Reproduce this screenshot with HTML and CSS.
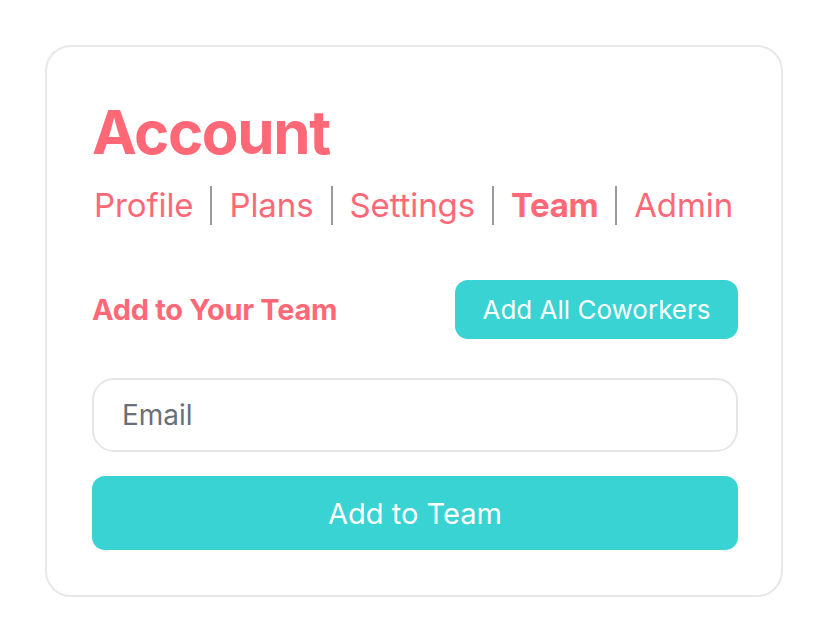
FILE: index.html
```html
<!DOCTYPE html>
<html lang="en">
<head>
    <meta charset="UTF-8">
    <meta name="viewport" content="width=device-width, initial-scale=1.0">
    <title>Account - Team</title>
    <link rel="stylesheet" href="styles.css">
</head>
<body>

<div class="card">
    <h1 class="title">Account</h1>
    <nav class="tabs">
        <a href="#" class="tab">Profile</a>
        <span class="sep"></span>
        <a href="#" class="tab">Plans</a>
        <span class="sep"></span>
        <a href="#" class="tab">Settings</a>
        <span class="sep"></span>
        <a href="#" class="tab active">Team</a>
        <span class="sep"></span>
        <a href="#" class="tab">Admin</a>
    </nav>

    <div class="team-head">
        <h2>Add to Your Team</h2>
        <button class="btn btn-small">Add All Coworkers</button>
    </div>

    <input type="email" class="email" placeholder="Email">
    <button class="btn btn-wide">Add to Team</button>
</div>

</body>
</html>
```

FILE: styles.css
```css
body {
    margin: 0;
    padding: 45px;
    font-family: Inter, "Noto Sans", sans-serif;
    background-color: #fff;
}
.card {
    box-sizing: border-box;
    width: 738px;
    height: 552px;
    border: 2px solid #e8e8e8;
    border-radius: 26px;
    padding: 47px 43px 44px 45px;
    display: flex;
    flex-direction: column;
}
.title {
    margin: 0;
    font-size: 60px;
    font-weight: 700;
    line-height: 76px;
    letter-spacing: -1.4px;
    color: #ff6977;
}
.tabs {
    display: flex;
    align-items: center;
    margin-top: 12px;
    margin-left: 2px;
}
.tab {
    flex-shrink: 0;
    font-size: 33px;
    line-height: 46px;
    letter-spacing: -0.1px;
    color: #ff6977;
    text-decoration: none;
}
.tab.active {
    font-weight: 700;
    letter-spacing: -0.4px;
}
.sep {
    flex-shrink: 0;
    width: 2px;
    height: 39px;
    background-color: #9a9a9a;
    margin: 0 17px;
}
.team-head {
    display: flex;
    justify-content: space-between;
    align-items: center;
    margin-top: 52px;
}
h2 {
    margin: 0;
    font-size: 29px;
    font-weight: 700;
    letter-spacing: -0.3px;
    color: #ff6977;
}
.btn {
    border: none;
    background-color: #38d3d2;
    color: #fff;
    font-family: inherit;
    border-radius: 13px;
    cursor: pointer;
}
.btn-small {
    width: 283px;
    height: 59px;
    font-size: 26px;
}
.email {
    box-sizing: border-box;
    margin-top: 39px;
    width: 100%;
    height: 74px;
    border: 2px solid #e6e6e6;
    border-radius: 22px;
    padding: 0 28px;
    font-family: inherit;
    font-size: 28px;
    outline: none;
}
.email::placeholder {
    color: #6b6f7a;
}
.btn-wide {
    margin-top: 24px;
    width: 100%;
    height: 74px;
    font-size: 29px;
}
```
